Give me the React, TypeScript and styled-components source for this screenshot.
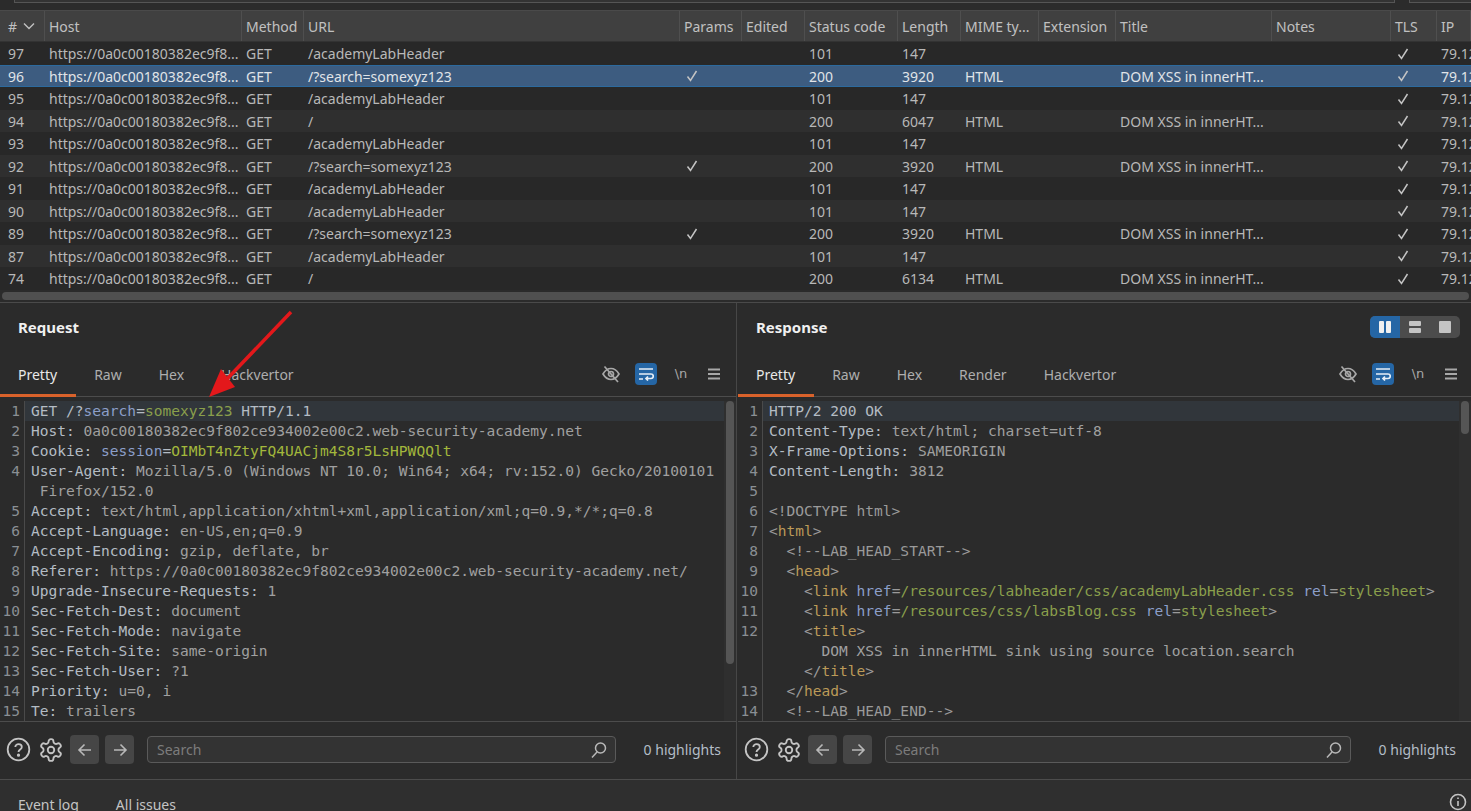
import React from "react";
import styled, { createGlobalStyle } from "styled-components";

const COLUMNS = "45px 197px 62px 376px 62px 63px 93px 63px 78px 77px 156px 119px 46px 1fr";
const UI_FONT = `"Noto Sans", "Liberation Sans", sans-serif`;

const GlobalStyle = createGlobalStyle`
  html, body {
    margin: 0;
    padding: 0;
    height: 100%;
    background: #2b2b2b;
    overflow: hidden;
  }
  * { box-sizing: border-box; }
`;

type Token = [string, string];
type Line = { n?: number; tokens: Token[]; active?: boolean };

const headers = ["#", "Host", "Method", "URL", "Params", "Edited", "Status code", "Length", "MIME ty...", "Extension", "Title", "Notes", "TLS", "IP"];

const host = "https://0a0c00180382ec9f8...";
const lab = "DOM XSS in innerHT...";

const rows = [
  { id: 97, url: "/academyLabHeader", params: false, status: 101, len: 147, mime: "", title: "" },
  { id: 96, url: "/?search=somexyz123", params: true, status: 200, len: 3920, mime: "HTML", title: lab, selected: true },
  { id: 95, url: "/academyLabHeader", params: false, status: 101, len: 147, mime: "", title: "" },
  { id: 94, url: "/", params: false, status: 200, len: 6047, mime: "HTML", title: lab },
  { id: 93, url: "/academyLabHeader", params: false, status: 101, len: 147, mime: "", title: "" },
  { id: 92, url: "/?search=somexyz123", params: true, status: 200, len: 3920, mime: "HTML", title: lab },
  { id: 91, url: "/academyLabHeader", params: false, status: 101, len: 147, mime: "", title: "" },
  { id: 90, url: "/academyLabHeader", params: false, status: 101, len: 147, mime: "", title: "" },
  { id: 89, url: "/?search=somexyz123", params: true, status: 200, len: 3920, mime: "HTML", title: lab },
  { id: 87, url: "/academyLabHeader", params: false, status: 101, len: 147, mime: "", title: "" },
  { id: 74, url: "/", params: false, status: 200, len: 6134, mime: "HTML", title: lab },
];

const head = (n: number, key: string, value: string): Line => ({
  n,
  tokens: [["k", key + ": "], ["v", value]],
});

const requestLines: Line[] = [
  { n: 1, active: true, tokens: [["k", "GET /?"], ["n", "search"], ["k", "="], ["g", "somexyz123"], ["k", " HTTP/1.1"]] },
  head(2, "Host", "0a0c00180382ec9f802ce934002e00c2.web-security-academy.net"),
  { n: 3, tokens: [["k", "Cookie: "], ["n", "session"], ["k", "="], ["b", "OIMbT4nZtyFQ4UACjm4S8r5LsHPWQQlt"]] },
  head(4, "User-Agent", "Mozilla/5.0 (Windows NT 10.0; Win64; x64; rv:152.0) Gecko/20100101"),
  { tokens: [["v", " Firefox/152.0"]] },
  head(5, "Accept", "text/html,application/xhtml+xml,application/xml;q=0.9,*/*;q=0.8"),
  head(6, "Accept-Language", "en-US,en;q=0.9"),
  head(7, "Accept-Encoding", "gzip, deflate, br"),
  head(8, "Referer", "https://0a0c00180382ec9f802ce934002e00c2.web-security-academy.net/"),
  head(9, "Upgrade-Insecure-Requests", "1"),
  head(10, "Sec-Fetch-Dest", "document"),
  head(11, "Sec-Fetch-Mode", "navigate"),
  head(12, "Sec-Fetch-Site", "same-origin"),
  head(13, "Sec-Fetch-User", "?1"),
  head(14, "Priority", "u=0, i"),
  head(15, "Te", "trailers"),
];

const linkLine = (n: number, path: string): Line => ({
  n,
  tokens: [["p", "    <"], ["t", "link "], ["n", "href"], ["p", "="], ["g", path + " "], ["n", "rel"], ["p", "="], ["g", "stylesheet"], ["p", ">"]],
});

const responseLines: Line[] = [
  { n: 1, active: true, tokens: [["k", "HTTP/2 200 OK"]] },
  head(2, "Content-Type", "text/html; charset=utf-8"),
  head(3, "X-Frame-Options", "SAMEORIGIN"),
  head(4, "Content-Length", "3812"),
  { n: 5, tokens: [["v", " "]] },
  { n: 6, tokens: [["p", "<!DOCTYPE html>"]] },
  { n: 7, tokens: [["p", "<"], ["t", "html"], ["p", ">"]] },
  { n: 8, tokens: [["p", "  <!--LAB_HEAD_START-->"]] },
  { n: 9, tokens: [["p", "  <"], ["t", "head"], ["p", ">"]] },
  linkLine(10, "/resources/labheader/css/academyLabHeader.css"),
  linkLine(11, "/resources/css/labsBlog.css"),
  { n: 12, tokens: [["p", "    <"], ["t", "title"], ["p", ">"]] },
  { tokens: [["v", "      DOM XSS in innerHTML sink using source location.search"]] },
  { tokens: [["p", "    </"], ["t", "title"], ["p", ">"]] },
  { n: 13, tokens: [["p", "  </"], ["t", "head"], ["p", ">"]] },
  { n: 14, tokens: [["p", "  <!--LAB_HEAD_END-->"]] },
];

const tokenColors: Record<string, string> = {
  k: "#b4bcc4",
  v: "#a0a0a0",
  n: "#8c9fc9",
  g: "#8a9f4c",
  b: "#a3b83c",
  t: "#bb9a58",
  p: "#9a9a9a",
};

const Page = styled.div`
  width: 1471px;
  height: 811px;
  display: flex;
  flex-direction: column;
  background: #2b2b2b;
  color: #c8c8c8;
  font-family: ${UI_FONT};
  overflow: hidden;
  position: relative;
`;

const TopStrip = styled.div`
  height: 10px;
  flex: none;
  display: flex;
  gap: 14px;
  padding-left: 14px;
`;

const FilterEdge = styled.div<{ $w?: number }>`
  flex: ${(p) => (p.$w ? `0 0 ${p.$w}px` : "1")};
  height: 3px;
  border-bottom: 1px solid #555;
  border-left: 1px solid #555;
  border-right: ${(p) => (p.$w ? "none" : "1px solid #555")};
  background: #333;
`;

const TableRow = styled.div<{ $selected?: boolean; $odd?: boolean }>`
  display: grid;
  grid-template-columns: ${COLUMNS};
  height: 22.5px;
  padding-top: 1px;
  align-items: center;
  font-size: 14px;
  background: ${(p) => (p.$selected ? "#3d5c80" : p.$odd ? "#2f2f2f" : "#282828")};
  color: ${(p) => (p.$selected ? "#e0e4e8" : "#b8b8b8")};
  box-shadow: ${(p) => (p.$selected ? "inset 0 1px 0 #2c6a9e, inset 0 -1px 0 #2c6a9e" : "none")};
`;

const HeaderRow = styled.div`
  display: grid;
  grid-template-columns: ${COLUMNS};
  height: 32px;
  flex: none;
  background: #404040;
  border-top: 1px solid #4a4a4a;
  border-bottom: 1px solid #333;
  font-size: 14px;
  color: #c0c0c0;
`;

const HeaderCell = styled.div`
  display: flex;
  align-items: center;
  gap: 6px;
  padding-left: 4px;
  border-right: 1px solid #4f4f4f;
  white-space: nowrap;
  overflow: hidden;
  &:first-child { padding-left: 8px; }
`;

const RowCell = styled.div`
  padding-left: 4px;
  white-space: nowrap;
  overflow: hidden;
  display: flex;
  align-items: center;
  &:first-child { padding-left: 8px; }
`;

const CheckMark = styled.span`
  margin-left: 1px;
  display: flex;
  color: #c4c4c4;
`;

const HScroll = styled.div`
  height: 13px;
  flex: none;
  padding: 2px 2px 0;
  border-bottom: 1px solid #4a4a4a;
  background: #2b2b2b;
`;

const HScrollThumb = styled.div`
  height: 8px;
  border-radius: 4px;
  background: #505050;
`;

const Split = styled.div`
  flex: 1;
  display: grid;
  grid-template-columns: 736px 735px;
  grid-template-rows: minmax(0, 1fr);
  min-height: 0;
`;

const Panel = styled.section<{ $divided?: boolean }>`
  display: flex;
  flex-direction: column;
  min-width: 0;
  min-height: 0;
  border-left: ${(p) => (p.$divided ? "1px solid #474747" : "none")};
  padding-left: ${(p) => (p.$divided ? "1px" : "0")};
`;

const PanelHead = styled.div`
  height: 52px;
  flex: none;
  display: flex;
  align-items: center;
  justify-content: space-between;
  padding: 0 11px 4px 18px;
`;

const PanelTitle = styled.h2`
  margin: 0;
  font-size: 15px;
  font-weight: 700;
  color: #f0f0f0;
`;

const LayoutToggle = styled.div`
  display: flex;
  height: 22px;
  border-radius: 5px;
  overflow: hidden;
  background: #4c4c4c;
`;

const LayoutOption = styled.div<{ $on?: boolean }>`
  width: 30px;
  display: flex;
  align-items: center;
  justify-content: center;
  background: ${(p) => (p.$on ? "#2566a5" : "transparent")};
`;

const TabBar = styled.div<{ $inset: number }>`
  height: 42px;
  flex: none;
  display: flex;
  align-items: stretch;
  justify-content: space-between;
  border-bottom: 1px solid #4c4c4c;
  padding-right: ${(p) => p.$inset}px;
`;

const Tabs = styled.div`
  display: flex;
`;

const Tab = styled.div<{ $on?: boolean }>`
  padding: 1px 19px 0 18px;
  margin-bottom: -1px;
  display: flex;
  align-items: center;
  font-size: 14px;
  color: ${(p) => (p.$on ? "#e8e8e8" : "#aeaeae")};
  border-bottom: 3px solid ${(p) => (p.$on ? "#d9622b" : "transparent")};
`;

const TabTools = styled.div`
  display: flex;
  align-items: center;
  gap: 13px;
  padding-bottom: 3px;
  color: #aaa;
`;

const ToolButton = styled.div<{ $on?: boolean; $tight?: boolean }>`
  width: 22px;
  height: 22px;
  margin-left: ${(p) => (p.$tight ? "-2px" : "0")};
  border-radius: 4px;
  display: flex;
  align-items: center;
  justify-content: center;
  font-family: "DejaVu Sans", sans-serif;
  font-size: 13px;
  color: ${(p) => (p.$on ? "#e6eef6" : "#a8a8a8")};
  background: ${(p) => (p.$on ? "#2566a5" : "transparent")};
`;

const CodeArea = styled.div`
  flex: 1;
  min-height: 0;
  display: flex;
  position: relative;
  overflow: hidden;
  padding-top: 4px;
`;

const CodeLines = styled.div`
  flex: 1;
  min-width: 0;
`;

const CodeLine = styled.div<{ $active?: boolean }>`
  display: flex;
  height: 20px;
  line-height: 20px;
  font-family: "DejaVu Sans Mono", "Liberation Mono", monospace;
  font-size: 14.55px;
  white-space: pre;
  background: ${(p) => (p.$active ? "#31363b" : "transparent")};
`;

const Gutter = styled.span`
  width: 25px;
  flex: none;
  text-align: right;
  padding-right: 4px;
  margin-right: 6px;
  color: #8a8f94;
  background: #2b2b2b;
  border-right: 1px solid #4a4a4a;
`;

const TokenText = styled.span<{ $kind: string }>`
  color: ${(p) => tokenColors[p.$kind]};
`;

const VScroll = styled.div`
  width: 12px;
  flex: none;
  padding: 0 2px;
  background: #2f2f2f;
`;

const VThumb = styled.div<{ $h: number }>`
  width: 8px;
  height: ${(p) => p.$h}px;
  border-radius: 4px;
  background: #555;
`;

const SearchBar = styled.div`
  height: 58px;
  flex: none;
  border-top: 1px solid #4c4c4c;
  display: flex;
  align-items: center;
  padding: 0 15px 2px 6px;
  gap: 6px;
`;

const RoundIcon = styled.div`
  width: 26px;
  display: flex;
  color: #c4c4c4;
`;

const NavButton = styled.div`
  width: 29px;
  height: 29px;
  border-radius: 4px;
  background: #464646;
  display: flex;
  align-items: center;
  justify-content: center;
  color: #b8b8b8;
`;

const SearchBox = styled.div`
  flex: 1;
  height: 27px;
  margin: 0 22px 0 7px;
  border: 1px solid #5a5a5a;
  border-radius: 4px;
  background: #333;
  display: flex;
  align-items: center;
  justify-content: space-between;
  padding: 0 7px 0 9px;
  font-size: 14px;
  color: #7c7c7c;
`;

const Highlights = styled.span`
  font-size: 14px;
  color: #b4bec8;
`;

const BottomBar = styled.footer`
  height: 32px;
  flex: none;
  border-top: 1px solid #4c4c4c;
  background: #2f2f2f;
  display: flex;
  justify-content: space-between;
  padding: 15px 4px 0 18px;
  font-size: 14px;
  color: #c4c4c4;
`;

const BottomTabs = styled.div`
  display: flex;
  gap: 37px;
  line-height: 20px;
`;

const InfoIcon = styled.svg`
  margin-top: -2px;
`;

const ArrowOverlay = styled.svg`
  position: absolute;
  left: 200px;
  top: 305px;
  pointer-events: none;
`;

const Check = () => (
  <svg width="14" height="14" viewBox="0 0 14 14" fill="none" stroke="currentColor" strokeWidth="1.5">
    <path d="M2.5 7.5 L5.5 11.5 L11.5 2" />
  </svg>
);

const Code = ({ lines, thumb }: { lines: Line[]; thumb: number }) => (
  <CodeArea>
    <CodeLines>
      {lines.map((line, i) => (
        <CodeLine key={i} $active={line.active}>
          <Gutter>{line.n ?? " "}</Gutter>
          {line.tokens.map(([kind, text], j) => (
            <TokenText key={j} $kind={kind}>
              {text}
            </TokenText>
          ))}
        </CodeLine>
      ))}
    </CodeLines>
    <VScroll>
      <VThumb $h={thumb} />
    </VScroll>
  </CodeArea>
);

const Tools = () => (
  <TabTools>
    <ToolButton>
      <svg width="20" height="20" viewBox="0 0 20 20" fill="none" stroke="currentColor" strokeWidth="1.7">
        <path d="M2 10 C5 5 7.5 4.5 10 4.5 C12.5 4.5 15 5 18 10 C15 15 12.5 15.5 10 15.5 C7.5 15.5 5 15 2 10 Z" />
        <circle cx="10" cy="10" r="2.5" />
        <path d="M3.5 2.5 L17 18" />
      </svg>
    </ToolButton>
    <ToolButton $on>
      <svg width="16" height="14" viewBox="0 0 16 14" fill="none" stroke="currentColor" strokeWidth="1.7">
        <path d="M1 2 H15 M1 7 H13 C16 7 16 11.5 13 11.5 H8 M10 9.5 L8 11.5 L10 13.5 M1 12 H5" />
      </svg>
    </ToolButton>
    <ToolButton>\n</ToolButton>
    <ToolButton $tight>
      <svg width="14" height="12" viewBox="0 0 14 12" fill="none" stroke="currentColor" strokeWidth="1.8">
        <path d="M1 1.5 H13 M1 6 H13 M1 10.5 H13" />
      </svg>
    </ToolButton>
  </TabTools>
);

const Finder = () => (
  <SearchBar>
    <RoundIcon>
      <svg width="25" height="25" viewBox="0 0 25 25" fill="none" stroke="currentColor" strokeWidth="1.8">
        <circle cx="12.5" cy="12.5" r="10.8" />
        <path d="M9.3 10 C9.3 6.2 15.8 6.2 15.8 10 C15.8 12.6 12.5 12.5 12.5 15" />
        <circle cx="12.5" cy="18.2" r="0.7" fill="currentColor" />
      </svg>
    </RoundIcon>
    <RoundIcon>
      <svg width="26" height="26" viewBox="0 0 24 24" fill="none" stroke="currentColor" strokeWidth="1.7" strokeLinecap="round" strokeLinejoin="round">
        <path d="M12.22 2h-.44a2 2 0 0 0-2 2v.18a2 2 0 0 1-1 1.73l-.43.25a2 2 0 0 1-2 0l-.15-.08a2 2 0 0 0-2.73.73l-.22.38a2 2 0 0 0 .73 2.73l.15.1a2 2 0 0 1 1 1.72v.51a2 2 0 0 1-1 1.74l-.15.09a2 2 0 0 0-.73 2.73l.22.38a2 2 0 0 0 2.73.73l.15-.08a2 2 0 0 1 2 0l.43.25a2 2 0 0 1 1 1.73V20a2 2 0 0 0 2 2h.44a2 2 0 0 0 2-2v-.18a2 2 0 0 1 1-1.73l.43-.25a2 2 0 0 1 2 0l.15.08a2 2 0 0 0 2.73-.73l.22-.39a2 2 0 0 0-.73-2.73l-.15-.08a2 2 0 0 1-1-1.74v-.5a2 2 0 0 1 1-1.74l.15-.09a2 2 0 0 0 .73-2.73l-.22-.38a2 2 0 0 0-2.73-.73l-.15.08a2 2 0 0 1-2 0l-.43-.25a2 2 0 0 1-1-1.73V4a2 2 0 0 0-2-2z" />
        <circle cx="12" cy="12" r="3" />
      </svg>
    </RoundIcon>
    <NavButton>
      <svg width="16" height="16" viewBox="0 0 16 16" fill="none" stroke="currentColor" strokeWidth="1.6">
        <path d="M14 8 H2 M7.5 2.5 L2 8 L7.5 13.5" />
      </svg>
    </NavButton>
    <NavButton>
      <svg width="16" height="16" viewBox="0 0 16 16" fill="none" stroke="currentColor" strokeWidth="1.6">
        <path d="M2 8 H14 M8.5 2.5 L14 8 L8.5 13.5" />
      </svg>
    </NavButton>
    <SearchBox>
      Search
      <svg width="18" height="18" viewBox="0 0 18 18" fill="none" stroke="#b8b8b8" strokeWidth="1.5">
        <circle cx="10.5" cy="7" r="5" />
        <path d="M7 11 L2 16.5" />
      </svg>
    </SearchBox>
    <Highlights>0 highlights</Highlights>
  </SearchBar>
);

export default function App() {
  return (
    <>
      <GlobalStyle />
      <Page>
        <TopStrip>
          <FilterEdge />
          <FilterEdge $w={62} />
        </TopStrip>
        <HeaderRow>
          {headers.map((h) => (
            <HeaderCell key={h}>
              {h}
              {h === "#" && (
                <svg width="12" height="8" viewBox="0 0 12 8" fill="none" stroke="currentColor" strokeWidth="1.4">
                  <path d="M1 1.5 L6 6.5 L11 1.5" />
                </svg>
              )}
            </HeaderCell>
          ))}
        </HeaderRow>
        {rows.map((r, i) => (
          <TableRow key={r.id} $selected={r.selected} $odd={i % 2 === 1}>
            <RowCell>{r.id}</RowCell>
            <RowCell>{host}</RowCell>
            <RowCell>GET</RowCell>
            <RowCell>{r.url}</RowCell>
            <RowCell>
              {r.params && (
                <CheckMark>
                  <Check />
                </CheckMark>
              )}
            </RowCell>
            <RowCell />
            <RowCell>{r.status}</RowCell>
            <RowCell>{r.len}</RowCell>
            <RowCell>{r.mime}</RowCell>
            <RowCell />
            <RowCell>{r.title}</RowCell>
            <RowCell />
            <RowCell>
              <CheckMark>
                <Check />
              </CheckMark>
            </RowCell>
            <RowCell>79.12</RowCell>
          </TableRow>
        ))}
        <HScroll>
          <HScrollThumb />
        </HScroll>
        <Split>
          <Panel>
            <PanelHead>
              <PanelTitle>Request</PanelTitle>
            </PanelHead>
            <TabBar $inset={11}>
              <Tabs>
                <Tab $on>Pretty</Tab>
                <Tab>Raw</Tab>
                <Tab>Hex</Tab>
                <Tab>Hackvertor</Tab>
              </Tabs>
              <Tools />
            </TabBar>
            <Code lines={requestLines} thumb={263} />
            <Finder />
          </Panel>
          <Panel $divided>
            <PanelHead>
              <PanelTitle>Response</PanelTitle>
              <LayoutToggle>
                <LayoutOption $on>
                  <svg width="12" height="12" viewBox="0 0 12 12" fill="#f0f0f0">
                    <rect x="0" y="0" width="5" height="12" rx="1" />
                    <rect x="7" y="0" width="5" height="12" rx="1" />
                  </svg>
                </LayoutOption>
                <LayoutOption>
                  <svg width="12" height="12" viewBox="0 0 12 12" fill="#c4c4c4">
                    <rect x="0" y="0" width="12" height="5" rx="1" />
                    <rect x="0" y="7" width="12" height="5" rx="1" />
                  </svg>
                </LayoutOption>
                <LayoutOption>
                  <svg width="12" height="12" viewBox="0 0 12 12" fill="#c4c4c4">
                    <rect x="0" y="0" width="12" height="12" rx="1" />
                  </svg>
                </LayoutOption>
              </LayoutToggle>
            </PanelHead>
            <TabBar $inset={9}>
              <Tabs>
                <Tab $on>Pretty</Tab>
                <Tab>Raw</Tab>
                <Tab>Hex</Tab>
                <Tab>Render</Tab>
                <Tab>Hackvertor</Tab>
              </Tabs>
              <Tools />
            </TabBar>
            <Code lines={responseLines} thumb={33} />
            <Finder />
          </Panel>
        </Split>
        <BottomBar>
          <BottomTabs>
            <span>Event log</span>
            <span>All issues</span>
          </BottomTabs>
          <InfoIcon width="18" height="18" viewBox="0 0 18 18" fill="none" stroke="#c4c4c4" strokeWidth="1.6">
            <circle cx="9" cy="9" r="7.5" />
            <path d="M9 8 V13 M9 4.5 V6" />
          </InfoIcon>
        </BottomBar>
        <ArrowOverlay width="100" height="100" viewBox="0 0 100 100">
          <path d="M91 7 L27 74" stroke="#e3181b" strokeWidth="3.5" fill="none" />
          <path d="M9 92 L21 64 L35 82 Z" fill="#e3181b" />
        </ArrowOverlay>
      </Page>
    </>
  );
}
